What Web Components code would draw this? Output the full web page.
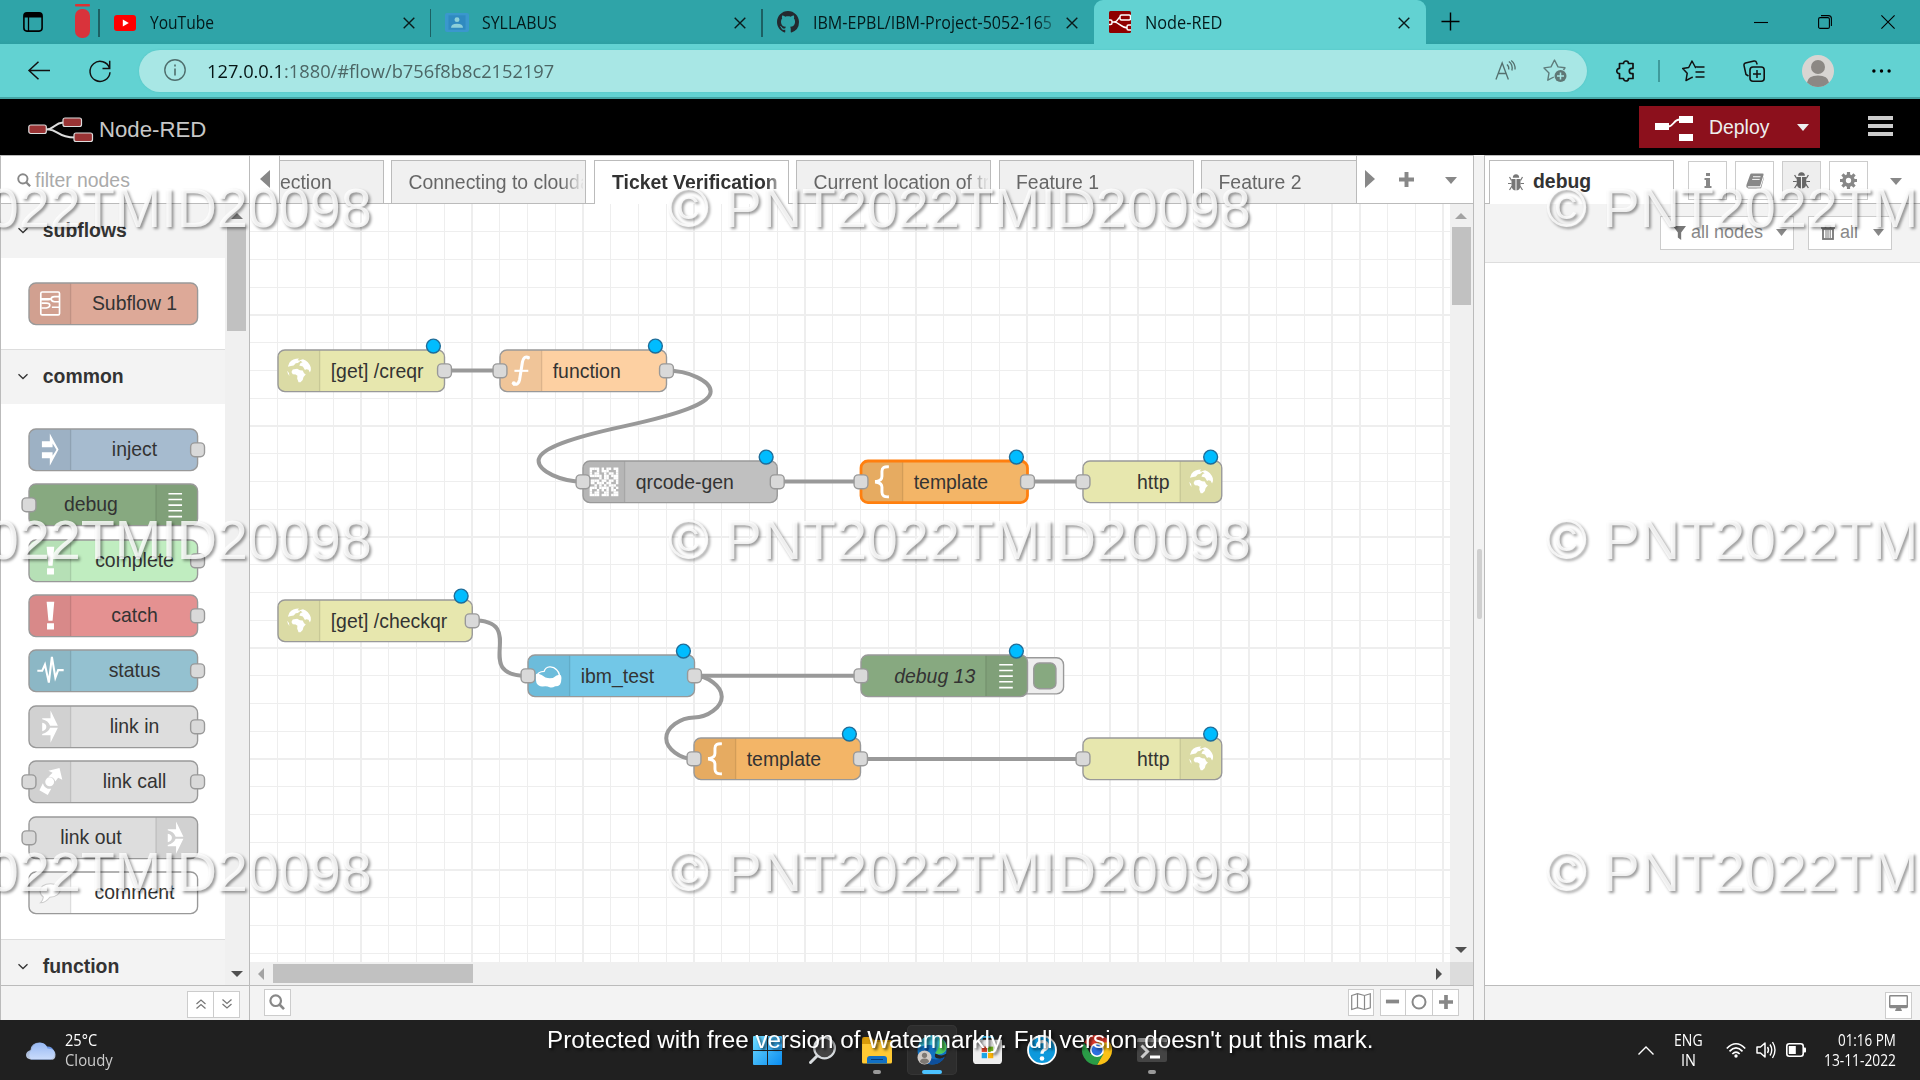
<!DOCTYPE html>
<html lang="en">
<head>
<meta charset="utf-8">
<title>Node-RED</title>
<style>
html,body{margin:0;padding:0;width:1920px;height:1080px;overflow:hidden;background:#fff}
body{font-family:"Liberation Sans",Arial,sans-serif}
</style>
</head>
<body>
<app-screen></app-screen>
<script>
const ICONS = {
 tabact:['0 0 20 20','<rect x=".9" y=".9" width="18.2" height="18.2" rx="3" fill="none" stroke="#000" stroke-width="1.6"/><path d="M1 5V3.500Q1 1 3.500 1H16.500Q19 1 19 3.500V5.500H1z"/><path d="M5.500 5v14" stroke="#000" stroke-width="1.300"/>'],
 redpill:['0 0 15 34','<rect width="15" height="2.500" rx="1" fill="#d33"/><rect y="5" width="15" height="29" rx="7" fill="#d9333b"/>'],
 youtube:['0 0 22 16','<rect width="22" height="16" rx="3" fill="#f00"/><path d="M8.800 4.600v6.800l6-3.400z" fill="#fff"/>'],
 x:['0 0 12 12','<path d="M.7.7 11.300 11.300M11.300.7.7 11.300" stroke="#0a1a1a" stroke-width="1.400" fill="none"/>'],
 classroom:['0 0 24 20','<rect width="24" height="20" rx="2" fill="#3a97cd"/><rect x="3.500" y="2.500" width="17" height="15" fill="#2f8ac0"/><circle cx="12" cy="7" r="2.500" fill="#8ccfd8"/><path d="M6 15.500q0-4.200 6-4.200t6 4.200z" fill="#8ccfd8"/>'],
 github:['0 0 16 16','<path fill="#24292f" d="M8 0C3.580 0 0 3.580 0 8c0 3.540 2.290 6.530 5.470 7.590.4.070.55-.17.55-.38 0-.19-.01-.82-.01-1.490-2.010.37-2.530-.49-2.690-.94-.09-.23-.48-.94-.82-1.130-.28-.15-.68-.52-.01-.53.63-.01 1.080.58 1.230.82.72 1.210 1.870.87 2.330.66.070-.52.28-.87.51-1.070-1.780-.2-3.640-.89-3.640-3.950 0-.87.31-1.590.82-2.150-.08-.2-.36-1.020.08-2.120 0 0 .67-.21 2.200.82.64-.18 1.320-.27 2-.27s1.360.09 2 .27c1.530-1.040 2.200-.82 2.200-.82.44 1.100.16 1.920.08 2.120.51.56.82 1.270.82 2.150 0 3.070-1.870 3.750-3.650 3.950.29.25.54.73.54 1.480 0 1.070-.01 1.930-.01 2.200 0 .21.15.46.55.38A8.010 8.010 0 0 0 16 8c0-4.420-3.580-8-8-8z"/>'],
 nrfav:['0 0 22 22','<clipPath id="c"><rect width="22" height="22" rx="1.500"/></clipPath><g clip-path="url(#c)"><rect width="22" height="22" fill="#8f0000"/><g fill="#8f0000" stroke="#fff" stroke-width="1.500"><path d="M2 11h3C10 11 8 6 12 6M5 11c5 0 7 6 14 6" fill="none"/><rect x="11" y="4" width="10.500" height="5" rx="1.500"/><rect x="-4" y="9" width="7" height="4.500" rx="1.500"/><rect x="18" y="14" width="8" height="5" rx="1.500"/></g></g>'],
 plusthin:['0 0 20 20','<path d="M10 .5v19M.5 10h19" stroke="#000" stroke-width="1.500"/>'],
 min:['0 0 14 14','<path d="M0 7.500h14" stroke="#000" stroke-width="1.100"/>'],
 restore:['0 0 14 14','<rect x=".6" y="2.600" width="10.800" height="10.800" rx="1.500" fill="none" stroke="#000" stroke-width="1.100"/><path d="M3 .6h7.400q3 0 3 3V11" fill="none" stroke="#000" stroke-width="1.100"/>'],
 winx:['0 0 14 14','<path d="M.4.4 13.600 13.600M13.600.4.4 13.600" stroke="#000" stroke-width="1.100"/>'],
 back:['0 0 22 20','<path d="M22 10H1M10.500.8 1 10l9.500 9.200" fill="none" stroke="#111" stroke-width="1.500"/>'],
 reload:['0 0 22 22','<path d="M20.600 8.500A10 10 0 1 0 21 12.200M20.700.8v7.700h-7.200" fill="none" stroke="#111" stroke-width="1.500"/>'],
 info:['0 0 22 22','<circle cx="11" cy="11" r="10.200" fill="none" stroke="#4f6e6d" stroke-width="1.400"/><path d="M11 9.500v7M11 5.500v2" stroke="#4f6e6d" stroke-width="1.600"/>'],
 aloud:['0 0 22 20','<path d="M1 19.500 7.500 3l6.500 16.500M3.500 13.500h8M12.500 4.500q2.500 2 1.800 5M14.500 1.500q4.500 3 3.200 9M17 .5q4.500 3.500 4 9" fill="none" stroke="#54716f" stroke-width="1.400"/>'],
 staradd:['0 0 24 23','<path d="M20.500 11 22 8.800l-7-.9L11.500 1 8 7.900l-7 1 5 5-1.200 7.300 6-3.200" fill="none" stroke="#5f7d7c" stroke-width="1.400" stroke-linejoin="round"/><circle cx="17.500" cy="17" r="6" fill="#5f7876"/><path d="M17.500 13.500v7M14 17h7" stroke="#a9e8e6" stroke-width="1.500"/>'],
 puzzle:['0 0 20 22','<path d="M5.500 3.500H8.500a2.500 2.500 0 0 1 5 0h4.500v4.800h-1a2.700 2.700 0 0 0 0 5.400h1v4.800h-4.500a2.500 2.500 0 0 1-5 0h-4v-4.800a2.600 2.600 0 1 1 0-5.400V3.500z" fill="none" stroke="#111" stroke-width="1.700" stroke-linejoin="round"/>'],
 fav:['0 0 23 22','<path d="M15 6.500 13.500 7.500 10 1 6.700 7.500l-6 1 4.500 4.800L4 20.500l6-3.200.8.3M15 7h7.500M13.500 12h9M13.500 17h9" fill="none" stroke="#111" stroke-width="1.500" stroke-linejoin="round"/>'],
 collect:['0 0 22 22','<path d="M5.500 16 3 14.500 1 5.500q-.3-2 1.500-2.500L11 1q2-.3 2.500 1.500l.7 2" fill="none" stroke="#111" stroke-width="1.500"/><rect x="7" y="7" width="14.200" height="14.200" rx="3" fill="none" stroke="#111" stroke-width="1.600"/><path d="M14 10v8M10 14h8" stroke="#111" stroke-width="1.500"/>'],
 avatar:['0 0 32 32','<circle cx="16" cy="16" r="16" fill="#d8d5d2"/><circle cx="16" cy="12" r="7" fill="#8c8884"/><path d="M5 27.500Q6 20.500 16 20.500T27 27.500Q22 32 16 32T5 27.500z" fill="#8c8884"/>'],
 dots:['0 0 20 4','<g><circle cx="2" cy="2" r="1.800"/><circle cx="10" cy="2" r="1.800"/><circle cx="18" cy="2" r="1.800"/></g>'],
 nrlogo:['0 0 66 26','<path d="M18 12.500c9 0 8-6.500 17-7M18 12.500h3c8 0 9 8 26 8" fill="none" stroke="#ddd" stroke-width="2"/><g fill="#993334" stroke="#ddd" stroke-width="1.200"><rect x=".8" y="8" width="17.500" height="8.500" rx="2"/><rect x="35" y="1" width="18.500" height="8.500" rx="2"/><rect x="46" y="16" width="18.500" height="8.500" rx="2"/></g>'],
 deploy:['0 0 38 25','<g fill="#fff"><rect y="7" width="14" height="7"/><rect x="24" width="14" height="7"/><rect x="24" y="18" width="14" height="7"/></g><path d="M13 10.500c6 0 5-7 12-7" fill="none" stroke="#fff" stroke-width="1.800"/>'],
 caret:['0 0 12 7','<path d="M0 0h12L6 7z" fill="currentColor"/>'],
 burger:['0 0 25 20','<path d="M0 2h25M0 10h25M0 18h25" stroke="#ccc" stroke-width="4"/>'],
 left:['0 0 10 18','<path d="M10 0v18L0 9z" fill="#888"/>'],
 right:['0 0 10 18','<path d="M0 0v18l10-9z" fill="#888"/>'],
 bold:['0 0 16 16','<path d="M8 0v16M0 8h16" stroke="#888" stroke-width="4.200"/>'],
 minus:['0 0 16 16','<path d="M1 8h14" stroke="#888" stroke-width="4"/>'],
 ring:['0 0 16 16','<circle cx="8" cy="8" r="6.500" fill="none" stroke="#888" stroke-width="2"/>'],
 search:['0 0 16 16','<circle cx="6.700" cy="6.700" r="5.300" fill="none" stroke="#888" stroke-width="2.200"/><path d="m10.500 10.500 4.500 4.700" stroke="#888" stroke-width="2.600"/>'],
 map:['0 0 20 17','<path d="M.7 2.500 6.500.7l7 1.800 5.800-1.800v14l-5.800 1.800-7-1.800-5.800 1.800zM6.500.7v14M13.500 2.500v14" fill="none" stroke="#888" stroke-width="1.200"/>'],
 monitor:['0 0 20 17','<path fill="#888" fill-rule="evenodd" d="M1.500 0h17Q20 0 20 1.500v11q0 1.500-1.500 1.500H12.500v1.500h1V17h-7v-1.500h1V14h-6Q0 14 0 12.500V1.500Q0 0 1.500 0zM1.500 1.600V10.500h17V1.600z"/>'],
 bug:['0 0 16 17','<g fill="none" stroke="currentColor" stroke-width="1.200"><path d="M3.500 6.500 1.500 3M12.500 6.500l2-3.500M3.500 9.500H0M12.500 9.500H16M4 12l-2.500 4M12 12l2.500 4"/></g><path d="M4.800 3.800a3.200 3.500 0 0 1 6.400 0z" fill="currentColor"/><path d="M3.500 5h4v11.500Q3.500 16 3.500 11zM12.500 5h-4v11.500q4-.5 4-5.500z" fill="currentColor"/>'],
 i:['0 0 8 15','<path fill="#888" d="M2 0h4v3H2zM.5 5H6v8h1.500v2H.5v-2H2V7H.5z"/>'],
 book:['0 0 18 17','<path fill="#888" d="M5.500.5h11q1.500 0 1 1.500L14 14H2.500q-1 0-1 .8t1 .7H14.500L18 4v1L15 16.500H2.500Q-.3 16 .5 12.500L4 2Q4.500.5 5.500.5z"/><path d="M7 4h7.500M6.200 6.800h7.500" stroke="#fff" stroke-width="1"/>'],
 gear:['0 0 16 16','<circle cx="8" cy="8" r="4.200" fill="none" stroke="#888" stroke-width="3.400"/><path d="M8 0v3M8 13v3M0 8h3M13 8h3M2.300 2.300l2 2M11.700 11.700l2 2M13.700 2.300l-2 2M4.300 11.700l-2 2" stroke="#888" stroke-width="3"/>'],
 filter:['0 0 14 14','<path d="M0 0h14L8.800 6.500V14L5.200 11.500v-5z" fill="#777"/>'],
 trash:['0 0 14 15','<path d="M0 3h14M4.500 3V1h5v2" fill="none" stroke="#777" stroke-width="1.600"/><rect x="2" y="4" width="10" height="10" fill="none" stroke="#777" stroke-width="1.800"/><path d="M5 5v8M7 5v8M9.200 5v8" stroke="#777" stroke-width="1"/>'],
 chev:['0 0 10 5','<path d="M.5.3 5 4.500 9.500.3" fill="none" stroke="#333" stroke-width="1.300"/>'],
 dup:['0 0 10 10','<path d="M.5 5 5 1l4.500 4M.5 9.500 5 5.500l4.500 4" fill="none" stroke="#777" stroke-width="1.300"/>'],
 ddown:['0 0 10 10','<path d="M.5.5 5 4.500 9.500.5M.5 5 5 9l4.500-4" fill="none" stroke="#777" stroke-width="1.300"/>'],
 sup:['0 0 12 6','<path d="M0 6 6 0l6 6z" fill="currentColor"/>'],
 sleft:['0 0 6 12','<path d="M6 0v12L0 6z" fill="currentColor"/>'],
 sright:['0 0 6 12','<path d="M0 0v12l6-6z" fill="currentColor"/>'],
 cloud:['0 0 30 20','<defs><linearGradient id="g" x2="0" y2="1"><stop stop-color="#9dbdf5"/><stop offset="1" stop-color="#dbe8ff"/></linearGradient></defs><path d="M5 19.500a5 6 0 0 1 .5-9.500A8.500 8.500 0 0 1 21 6.500a7 7 0 0 1 4 13z" fill="#6f9ae8"/><path d="M4.500 19.500q-4.500-1-4.500-4.500t4.500-5q.8-7.500 9-7.500 6.500 0 8 6 8 0 8 6t-4.500 5z" fill="url(#g)" opacity=".85"/>'],
 win:['0 0 29 29','<defs><linearGradient id="g" x2="1" y2="1"><stop stop-color="#6fdcff"/><stop offset="1" stop-color="#0a8cf0"/></linearGradient></defs><path d="M0 1q0-1 1-1h13v14H0zM15 0h13q1 0 1 1v13H15zM0 15h14v14H1q-1 0-1-1zM15 15h14v13q0 1-1 1H15z" fill="url(#g)"/>'],
 wsearch:['0 0 27 29','<circle cx="15.500" cy="12" r="10.300" fill="#444" stroke="#d8dcdf" stroke-width="2.300"/><path d="M8 20 1.500 26.500" stroke="#d8dcdf" stroke-width="3" stroke-linecap="round"/>'],
 folder:['0 0 30 27','<path d="M0 2q0-2 2-2h7l3 3h16q2 0 2 2v10H0z" fill="#d99b0a"/><path d="M0 7h11l3-2h16v20q0 1.500-1.500 1.500h-27Q0 26.500 0 25z" fill="#ffc933"/><path d="M5 26.500V22q0-3 3-3h14q3 0 3 3v4.500z" fill="#1170c4"/><path d="M9 22.500h12" stroke="#063d78" stroke-width="1"/>'],
 edge:['0 0 30 30','<circle cx="15" cy="15" r="14.500" fill="#1272c2"/><path d="M1 12Q4 0 16 .5 29 1.500 29.500 12c0 7-8 8.500-11 6.500 2-2 1.500-8-5-8.500C7 9.500 2 13 1 12z" fill="#36b7cf"/><path d="M22 2.500q7.500 4 7.500 10.500c-1 6-8 7-11.500 5 4-3 5-10 4-15.500z" fill="#51cc5c"/><path d="M18.500 18.500q6 3.500 10 .5l1.500 0q-1 2-2 3.500-4 2-9 .5-2-2-.5-4.500z" fill="#252525"/><path d="M11 16q-1 8 8 8.500 5 0 9-3Q24 29.500 15 29.500 4 28 4 20q0-6 8-7z" fill="#0d4f9c"/><circle cx="7.500" cy="22.500" r="7" fill="#cfcac6"/><circle cx="7.500" cy="20.300" r="2.600" fill="#7d7873"/><path d="M3 27q0-3.500 4.500-3.500T12 27q-4.500 4-9 0z" fill="#7d7873"/>'],
 store:['0 0 30 30','<path d="M9 6V3q0-2 2-2h8q2 0 2 2v3" fill="none" stroke="#38bdf0" stroke-width="2"/><path d="M0 4h30v21q0 4-4 4H4q-4 0-4-4z" fill="#eee"/><path d="M9 11h5.500v5.500H9z" fill="#e8482c"/><path d="M15.500 11H21v5.500h-5.500z" fill="#72b51c"/><path d="M9 17.500h5.500V23H9z" fill="#1ba5e6"/><path d="M15.500 17.500H21V23h-5.500z" fill="#fcb40a"/>'],
 help:['0 0 30 30','<circle cx="15" cy="15" r="14" fill="#0d99dc" stroke="#fff" stroke-width="1.800"/><path d="M10.500 11.500q0-5 5-5 4.800.3 4.800 4.200 0 2.600-2.800 4-2.500 1.400-2.500 4" fill="none" stroke="#fff" stroke-width="3.200"/><circle cx="15" cy="23.500" r="2.300" fill="#fff"/>'],
 chrome:['0 0 30 30','<path d="M15 15 2 7.500A15 15 0 0 1 28 7.500z" fill="#e33b2e"/><path d="M28 7.500A15 15 0 0 1 15 30l6-11.500L15 7.500z" fill="#fbc116"/><path d="M2 7.500A15 15 0 0 0 15 30l6.500-11-13 0z" fill="#2a9c47"/><circle cx="15" cy="15" r="7" fill="#fff"/><circle cx="15" cy="15" r="5.400" fill="#2c70e0"/>'],
 term:['0 0 30 24','<rect width="30" height="24" rx="2" fill="#444"/><path d="M0 2q0-2 2-2h26q2 0 2 2v2H0z" fill="#888"/><path d="m4.500 7.500 6 6-6 6" fill="none" stroke="#ccc" stroke-width="3"/><path d="M13 19h10" stroke="#fff" stroke-width="3"/>'],
 wchev:['0 0 16 9','<path d="M.5 8.500 8 1l7.500 7.500" fill="none" stroke="#fff" stroke-width="1.400"/>'],
 wifi:['0 0 20 16','<g fill="none" stroke="#fff" stroke-width="1.700"><path d="M.8 6.500q9.200-9.500 18.400 0M3.500 9.300q6.500-6.700 13 0M6.300 12q3.700-3.800 7.400 0"/></g><circle cx="10" cy="14" r="1.700" fill="#fff"/>'],
 vol:['0 0 20 18','<path d="M1 6h3.500L9 2v14l-4.500-4H1z" fill="none" stroke="#fff" stroke-width="1.500" stroke-linejoin="round"/><path d="M11.500 6q2 3 0 6M14 3.500q3.500 5.500 0 11M16.500 1q5 8 0 16" fill="none" stroke="#fff" stroke-width="1.400"/>'],
 batt:['0 0 20 14','<rect x=".8" y=".8" width="16.400" height="12.400" rx="2.500" fill="none" stroke="#fff" stroke-width="1.600"/><rect x="2.800" y="3" width="7" height="8" fill="#fff"/><path d="M18 4.500h1q1 0 1 1v3q0 1-1 1h-1z" fill="#fff"/>']
};

/* Glyphs of the flow nodes, each drawn in a 30 by 30 box. */
const GLYPHS = {
 subflow:'<g fill="none" stroke="#fff" stroke-width="1.200"><rect x="8.500" y="6.500" width="13.500" height="16.500" rx="1"/><path d="M8.500 12h5.500q1 0 1.500-.5M8.500 11.500H16M16.500 17.500H22M9 14.500h3.500q2.500 0 2.500 1.500t-2.500 2H9M22 9.800h-3.500q-2.500 0-2.500 1.700t2.500 2H22"/></g>',
 inject:'<path fill="#fff" fill-rule="evenodd" d="M9.300 8.800H15V3.200L21.300 14.800 15 26.400V21H9.300V16.800H17V13.200H9.300zM17 10.500V19.300L19.800 14.900z"/>',
 debug:'<path d="M10 7h9.800M10 11.200h9.800M10 15.200h9.800M10 19.300h9.800M10 23.500h9.800" stroke="#fff" stroke-width="1.200"/>',
 bang:'<path fill="#fff" d="M12.700 4.800h5.500l-1.200 13.700h-3zM13 20.300h5v4.500h-5z"/>',
 status:'<path d="M6 15h3.500l2-4.500 2.800 13L16.500 5l2.500 15 2-5.500H25" fill="none" stroke="#fff" stroke-width="1.500" stroke-linejoin="miter"/>',
 linkin:'<path fill="#fff" d="M15.500 3.200 20.800 14.300H15.200Q14 10.500 9.500 9.500V8.800h6zM15.500 26.400 20.800 15.700H15.200Q14 19 9.500 20.200V21h6z"/><path d="M9.500 12q3 .5 3 3t-3 3.200z" fill="#fff"/>',
 linkcall:'<path fill="#fff" d="M14 7 22 5l2 8.500-3-1.500-2 2.800a4.600 4.600 0 0 0-5-3.500L17 8.500z"/><circle cx="14.900" cy="15" r="3.200" fill="#fff"/><path fill="#fff" d="m10 16 -2.500 5 6 3.500L16 20a5.200 5.200 0 0 1-6-4z"/>',
 comment:'<path d="M15.500 8.500c4.500 0 7 2 7 4.500s-3 5-7.500 5.200q-3 4-6.700 4 1.800-1.600 2-4.200-2.300-1.600-2.300-4.200c0-3.200 3-5.300 7.500-5.300z" fill="#fff" stroke="#ccc" stroke-width=".8"/>',
 globe:'<path fill="#fff" d="M8.600 9.200Q11 6.200 15.500 6.200l-1 1.200 2.200.3-2 1.600-1.500.2-1.500 1.600-2 .4-2.200.6zM16 7.300l2.400-.6q4.200 1.600 5.600 5.800.5 2.200-.6 3.800l-1-2-1.600-.4-1 .5-1.500-2.500-2.600-.8 1-1.700 1.400-.5zM11 14l3.200-.4 2 1 2 .2 1 2 1.200.8-1.600 1.800-.6 2.200-1.600 1.600h-1.400l-1-2.600.2-2-1.300-1-2.100-.2-.9-1.500zM7 15l1.300 1.500.3 2.200L7.500 17z"/>',
 func:'<path d="M21.300 5.500q-3.800-1.700-4.700 3L14.500 21.500q-.8 4-4.500 3" fill="none" stroke="#fff" stroke-width="2.200"/><path d="M10.800 15h10" stroke="#fff" stroke-width="1.500"/><circle cx="20.700" cy="5.600" r="1.300" fill="#fff"/><circle cx="10.400" cy="24" r="1.500" fill="#fff"/>',
 brace:'<path d="M20.500 4.200q-5-.5-5 3.200v3.600q0 3.200-4 3.700v.6q4 .5 4 3.700V22.500q0 3.700 5 3.300" fill="none" stroke="#fff" stroke-width="2.100"/>',
 cloud:'<path d="M7 15q.5-3 5-3.200 1-3 4-3.200t5 2q1.500 1.200 2.300 4.400" fill="none" stroke="#fff" stroke-width="1"/><path d="M6 14.500Q6 13 8 13.600t5 2.600q5 1.500 8-1.500l2-.5q1.500 0 1.500 2.500t-1 4.500q-1.500 1.500-3.500 1.300-2 1.400-4 .8-2-1.200-5-.6-3 .2-4.500-2.500Q5.800 17.500 6 14.500z" fill="#fff"/>',
 qr:(()=>{const m=['111101011011','100101110001','101100101101','111110110111','000010110011','111101101101','110111011001','001010101110','111011110101','100101010110','101100110011','111101110111'];let s='';m.forEach((r,y)=>[...r].forEach((c,x)=>{if(c==='1')s+=`<rect x="${(5.200+x*1.720).toFixed(2)}" y="${(4.700+y*1.720).toFixed(2)}" width="1.760" height="1.760" fill="#fff"/>`}));return s})()
};

function define(name, html, setup){
  const t=document.createElement('template'); t.innerHTML=html;
  customElements.define(name, class extends HTMLElement{
    connectedCallback(){
      if(this.shadowRoot) return;
      this.attachShadow({mode:'open'}).append(t.content.cloneNode(true));
      if(setup) setup.call(this,this.shadowRoot);
    }
  });
}

/* Icon: name, drawn width (w) and height (h). */
customElements.define('ui-icon', class extends HTMLElement{
  connectedCallback(){
    const [vb,body]=ICONS[this.getAttribute('name')], w=this.getAttribute('w'), h=this.getAttribute('h');
    if(!this.shadowRoot) this.attachShadow({mode:'open'});
    this.shadowRoot.innerHTML=`<style>:host{display:block;flex:none;width:${w}px;height:${h}px}svg{display:block;overflow:visible}</style><svg width="${w}" height="${h}" viewBox="${vb}" preserveAspectRatio="none">${body}</svg>`;
  }
});

/* One line of text, condensed or widened to the width w. */
define('fit-text','<style>:host{display:block;flex:none;white-space:pre;text-align:left}span{display:inline-block;transform-origin:0 50%}</style><span><slot></slot></span>',function(r){
  const w=+this.getAttribute('w'), s=r.querySelector('span');
  this.style.width=w+'px';
  s.style.transform=`scaleX(${w/s.offsetWidth})`;
});

/* Flow node, used in the palette and on the canvas. */
customElements.define('flow-node', class extends HTMLElement{
  connectedCallback(){
    const a=n=>this.getAttribute(n), has=n=>this.hasAttribute(n);
    const K=1.3875, w=+a('w'), right=has('right'), pal=has('palette');
    let label;
    if(pal) label=`<text x="${right?(w-30)/2-1.100:30+(w-30)/2+.3}" y="19.200" text-anchor="middle">${a('label')}</text>`;
    else label=right?`<text x="${w-37.700}" y="20" text-anchor="end">${a('label')}</text>`:`<text x="38" y="20">${a('label')}</text>`;
    const ix=right?w-30:0;
    const gx=right&&pal?w-31:ix;
    const port=x=>`<rect x="${x-5}" y="10" width="10" height="10" rx="3" fill="#d9d9d9" stroke="#999"/>`;
    const sel=has('selected');
    this.attachShadow({mode:'open'}).innerHTML=`<style>
      :host{display:block;flex:none;width:${w*K}px;height:${30*K}px}
      :host([x]){position:absolute;left:${(a('x')||0)*K}px;top:${.1+((a('y')||0)-15)*K}px}
      svg{display:block;overflow:visible}
      text{font:14px "Liberation Sans",Arial,sans-serif;fill:#333}
      :host([italic]) text{font-style:italic}
      </style><svg width="${w*K}" height="${30*K}" viewBox="0 0 ${w} 30">
      ${has('button')?`<rect x="${w-10}" y="2" width="36" height="26" rx="5" fill="#eee" stroke="#999"/><rect x="${w+4.500}" y="5.800" width="16" height="18.500" rx="4" fill="${a('color')}" stroke="#999"/>`:''}
      <rect width="${w}" height="30" rx="5" fill="${a('color')}" stroke="none"/>
      <path d="${right?`M${ix} 0H${w-5}Q${w} 0 ${w} 5V25Q${w} 30 ${w-5} 30H${ix}z`:'M30 0H5Q0 0 0 5V25Q0 30 5 30H30z'}" fill="#000" fill-opacity=".05"/>
      <path d="M${right?ix:30} 0V30" stroke="#000" stroke-opacity=".1"/>
      <rect width="${w}" height="30" rx="5" fill="none" stroke="${sel?'#ff7f0e':'#999'}" stroke-width="${sel?2:1}"/>
      <g transform="translate(${pal?gx:ix-.4})">${GLYPHS[a('icon')]}</g>${label}
      ${has('in')?port(0):''}${has('out')?port(w):''}
      ${has('changed')?`<circle cx="${w-8}" cy="-2.800" r="5" fill="#00bcff" stroke="#1f6d99"/>`:''}</svg>`;
  }
});

define('edge-tab',`<style>
:host{display:flex;align-items:center;height:44px;box-sizing:border-box;flex:none;font:18px "Open Sans","Noto Sans",sans-serif;color:#04191a}
.t{flex:1;line-height:26px;padding-bottom:3px;overflow:hidden;min-width:0}
:host([fade]) .t{-webkit-mask:linear-gradient(90deg,#000 88%,transparent 99%)}
:host([active]){background:#62d2d2;border-radius:9px 9px 0 0}
</style><slot name="icon"></slot><div class="t"><slot></slot></div><ui-icon name="x" w="12" h="12"></ui-icon>`);

define('edge-tabstrip',`<style>
:host{display:flex;align-items:center;height:44px;background:linear-gradient(#2fa4a8 90%,#2d9fa2);flex:none}
.sep{width:1.500px;height:28px;background:#1c6063;flex:none;margin-top:2px}
</style>
<ui-icon name="tabact" w="20" h="20" style="margin-left:23px"></ui-icon>
<ui-icon name="redpill" w="15" h="34" style="margin:-3px 0 0 32px"></ui-icon>
<div class="sep" style="margin-left:8px"></div>
<edge-tab style="width:330px;padding:2px 15px 0 14px"><ui-icon slot="icon" name="youtube" w="22" h="16" style="margin-right:14px;margin-top:-1px"></ui-icon><fit-text w="64">YouTube</fit-text></edge-tab>
<div class="sep"></div>
<edge-tab style="width:330px;padding:2px 15px 0 14px"><ui-icon slot="icon" name="classroom" w="24" h="19" style="margin:-1px 13px 0 0"></ui-icon><fit-text w="75">SYLLABUS</fit-text></edge-tab>
<div class="sep"></div>
<edge-tab fade style="width:331px;padding:2px 16px 0 14px"><ui-icon slot="icon" name="github" w="22" h="22" style="margin:-2px 14px 0 0"></ui-icon><fit-text w="239">IBM-EPBL/IBM-Project-5052-165</fit-text></edge-tab>
<edge-tab active style="width:332px;padding:2px 16px 0 15px"><ui-icon slot="icon" name="nrfav" w="22" h="22" style="margin:-2px 14px 0 0"></ui-icon><fit-text w="77">Node-RED</fit-text></edge-tab>
<ui-icon name="plusthin" w="19" h="19" style="margin-left:15px;margin-top:-1px"></ui-icon>
<ui-icon name="min" w="14" h="14" style="margin-left:294px"></ui-icon>
<ui-icon name="restore" w="14" h="14" style="margin-left:50px"></ui-icon>
<ui-icon name="winx" w="14" h="14" style="margin-left:49px"></ui-icon>`);

define('edge-toolbar',`<style>
:host{display:flex;align-items:center;height:55px;box-sizing:border-box;background:#62d2d2;border-bottom:2px solid #45a5a5;flex:none;font:18px "Open Sans","Noto Sans",sans-serif}
.addr{display:flex;align-items:center;width:1448px;height:42px;border-radius:21px;background:#a8e7e5;margin-left:28px;box-sizing:border-box;padding:0 20px 0 25px;flex:none;box-shadow:0 0 2px #52c2c2}
fit-text{line-height:26px;color:#4c6665}
b{font-weight:400;color:#051515}
</style>
<ui-icon name="back" w="22" h="19" style="margin-left:28px"></ui-icon>
<ui-icon name="reload" w="22" h="22" style="margin-left:39px"></ui-icon>
<div class="addr"><ui-icon name="info" w="22" h="22" style="margin-top:-1px"></ui-icon><fit-text w="347" style="margin-left:21px"><b>127.0.0.1</b>:1880/#flow/b756f8b8c2152197</fit-text>
<ui-icon name="aloud" w="21" h="20" style="margin-left:auto;margin-top:-2px"></ui-icon><ui-icon name="staradd" w="24" h="23" style="margin-left:27px"></ui-icon></div>
<ui-icon name="puzzle" w="20" h="22" style="margin-left:28px"></ui-icon>
<div style="width:1.500px;height:22px;background:#3f9b9c;margin-left:23px"></div>
<ui-icon name="fav" w="23" h="22" style="margin-left:22px"></ui-icon>
<ui-icon name="collect" w="22" h="22" style="margin-left:38px"></ui-icon>
<ui-icon name="avatar" w="32" h="32" style="margin-left:37px"></ui-icon>
<ui-icon name="dots" w="19" h="4" style="margin-left:38px"></ui-icon>`);

define('nr-header',`<style>
:host{display:flex;align-items:center;height:56px;background:#000;flex:none;color:#c7c7c7}
.name{font-size:22.200px;line-height:26px;margin:5px auto 0 5px}
.dep{display:flex;align-items:center;width:181px;height:42px;background:#8c101c;color:#eee;font-size:19.400px;box-sizing:border-box;padding-left:16px}
</style>
<ui-icon name="nrlogo" w="66" h="26" style="margin:6px 0 0 28px"></ui-icon><div class="name">Node-RED</div>
<div class="dep"><ui-icon name="deploy" w="38" h="25" style="margin-top:2px"></ui-icon><span style="margin-left:16px">Deploy</span><ui-icon name="caret" w="12" h="7" style="margin-left:28px"></ui-icon></div>
<ui-icon name="burger" w="25" h="20" style="margin:-2px 27px 0 48px"></ui-icon>`);

define('palette-category',`<style>
:host{display:block}
.h{display:flex;align-items:center;height:54.500px;box-sizing:border-box;background:#f3f3f3;border-top:1px solid #ddd;padding-left:17px;font-weight:700;font-size:19.400px;color:#333}
.h span{margin-left:14.800px}
.b{display:flex;flex-direction:column;gap:13.800px;padding:25.200px 0 24.800px 28px}
:host([empty]) .b{display:none}
</style><div class="h"><ui-icon name="chev" w="10" h="5"></ui-icon><span><slot name="title"></slot></span></div><div class="b"><slot></slot></div>`);

define('nr-palette',`<style>
:host{display:flex;flex-direction:column;width:249px;box-sizing:border-box;border-left:1px solid #bbb;flex:none}
.s{display:flex;align-items:center;height:49px;box-sizing:border-box;border-top:1px solid #bbb;border-bottom:1px solid #bbb;padding-left:16px;color:#aaa;font-size:19.400px;flex:none}
.m{display:flex;height:781px;overflow:hidden;flex:none}
.list{width:224px;overflow:hidden}
.bar{width:24px;background:#f0f0f0;display:flex;flex-direction:column;align-items:center;box-sizing:border-box;padding:9px 1px 8px 0;color:#505050}
.thumb{width:19px;height:104px;background:#c1c1c1;margin-top:8px}
.f{display:flex;justify-content:flex-end;height:35px;box-sizing:border-box;border-top:1px solid #bbb;background:#f3f3f3;padding:5px 9px 0 0}
.f div{width:27px;height:27px;box-sizing:border-box;border:1px solid #ccc;background:#fff;display:grid;place-items:center}
.f ui-icon{margin-top:-2px}
</style>
<div class="s"><ui-icon name="search" w="14" h="14"></ui-icon><span style="margin:2px 0 0 4px">filter nodes</span></div>
<div class="m"><div class="list">
<palette-category style="margin-top:-1px"><span slot="title">subflows</span>
<flow-node palette w="121.500" label="Subflow 1" color="#dda998" icon="subflow"></flow-node></palette-category>
<palette-category><span slot="title">common</span>
<flow-node palette w="121.500" label="inject" color="#a6bbcf" icon="inject" out></flow-node>
<flow-node palette w="121.500" label="debug" color="#87a980" icon="debug" right in></flow-node>
<flow-node palette w="121.500" label="complete" color="#c0edc0" icon="bang" out></flow-node>
<flow-node palette w="121.500" label="catch" color="#e49191" icon="bang" out></flow-node>
<flow-node palette w="121.500" label="status" color="#94c1d0" icon="status" out></flow-node>
<flow-node palette w="121.500" label="link in" color="#dddddd" icon="linkin" out></flow-node>
<flow-node palette w="121.500" label="link call" color="#dddddd" icon="linkcall" in out></flow-node>
<flow-node palette w="121.500" label="link out" color="#dddddd" icon="linkin" right in></flow-node>
<flow-node palette w="121.500" label="comment" color="#ffffff" icon="comment"></flow-node></palette-category>
<palette-category empty><span slot="title">function</span></palette-category>
</div><div class="bar"><ui-icon name="sup" w="12" h="6" style="color:#777"></ui-icon><div class="thumb"></div><ui-icon name="caret" w="12" h="6" style="margin-top:auto"></ui-icon></div></div>
<div class="f"><div><ui-icon name="dup" w="10" h="10"></ui-icon></div><div style="margin-left:-1px"><ui-icon name="ddown" w="10" h="10"></ui-icon></div></div>`);

define('flow-tab',`<style>
:host{display:block;width:195px;height:43px;box-sizing:border-box;border:1px solid #bbb;border-bottom:0;background:#f0f0f0;flex:none;font-size:19.400px;line-height:40px;color:#666;padding:1px 2px 0 16.500px}
div{overflow:hidden;white-space:nowrap;-webkit-mask:linear-gradient(90deg,#000 88%,rgba(0,0,0,.1) 99%)}
:host([active]){height:44px;margin-bottom:-1px;background:#fff;color:#333;font-weight:700;padding-left:17.500px}
</style><div><slot></slot></div>`);

define('flow-canvas',`<style>
:host{display:block;position:relative;width:1200px;height:758px;background:#fff;overflow:hidden;flex:none}
svg{position:absolute;inset:0}
</style><svg width="1200" height="758"><g class="grid" fill="#eee"></g><g transform="translate(0 .1) scale(1.3875)" fill="none" stroke="#999" stroke-width="2.900">
<path d="M140 120H180"/>
<path d="M300 120C316 120 332 127.500 332 135S316 150 270 160 208 177.500 208 185 224 200 240 200"/>
<path d="M380 200H440M560 200H600M320 340H440M440 400H600"/>
<path d="M160 300C202.400 300 157.600 340 200 340"/>
<path d="M320 340C330 340 340 347.500 340 355S330 370 320 370 300 377.500 300 385 310 400 320 400"/></g></svg>
<flow-node x="20" y="120" w="120" label="[get] /creqr" color="#e7e7ae" icon="globe" out changed></flow-node>
<flow-node x="180" y="120" w="120" label="function" color="#fdd0a2" icon="func" in out changed></flow-node>
<flow-node x="240" y="200" w="140" label="qrcode-gen" color="#c0c0c0" icon="qr" in out changed></flow-node>
<flow-node x="440" y="200" w="120" label="template" color="#f3b567" icon="brace" in out changed selected></flow-node>
<flow-node x="600" y="200" w="100" label="http" color="#e7e7ae" icon="globe" right in changed></flow-node>
<flow-node x="20" y="300" w="140" label="[get] /checkqr" color="#e7e7ae" icon="globe" out changed></flow-node>
<flow-node x="200" y="340" w="120" label="ibm_test" color="#72c7e7" icon="cloud" in out changed></flow-node>
<flow-node x="440" y="340" w="120" label="debug 13" color="#87a980" icon="debug" right italic in changed button></flow-node>
<flow-node x="320" y="400" w="120" label="template" color="#f3b567" icon="brace" in out changed></flow-node>
<flow-node x="600" y="400" w="100" label="http" color="#e7e7ae" icon="globe" right in changed></flow-node>`,function(r){
  let s='';
  for(let n=0;n<43;n++){const p=27+n*27.750,f=p%1,two=f===.25||(f===.5&&n>=30);
    s+=`<rect x="${two?Math.floor(p):Math.round(p)}" width="${two?2:1}" height="758"/>`;}
  for(let n=0;n<27;n++){const p=27+n*27.750,two=p%1===.25;
    s+=`<rect y="${two?Math.floor(p):Math.round(p)}" height="${two?2:1}" width="1200"/>`;}
  r.querySelector('.grid').innerHTML=s;
});

define('nr-workspace',`<style>
:host{display:flex;flex-direction:column;width:1225px;box-sizing:border-box;border-left:1px solid #bbb;border-right:1px solid #bbb;flex:none;background:#fff}
.tabs{display:flex;height:49px;box-sizing:border-box;border-top:1px solid #bbb;border-bottom:1px solid #bbb;flex:none}
.scroll{display:flex;align-items:flex-end;gap:7.500px;width:1078px;margin-left:28px;border-left:1px solid #bbb;border-right:1px solid #bbb;box-sizing:border-box;flex:none;height:47px;clip-path:inset(0 0 -1px 0)}
.view{display:flex;height:758px}
.v{width:23px;background:#f0f0f0;display:flex;flex-direction:column;align-items:center;box-sizing:border-box;padding:9px 0 9px}
.h{display:flex;height:23px;background:#f0f0f0;align-items:center;color:#505050}
.f{display:flex;height:35px;box-sizing:border-box;border-top:1px solid #bbb;background:#f3f3f3;padding:3px 14px 0 14px}
.f div{width:26.500px;height:27px;box-sizing:border-box;border:1px solid #ccc;background:#fff;display:grid;place-items:center}
.f ui-icon{margin-top:-2px}
</style>
<div class="tabs">
<ui-icon name="left" w="10" h="18" style="margin:14px -20px 0 10px"></ui-icon>
<div class="scroll" style="margin-left:29px"><flow-tab style="width:103.500px;padding-left:0;border-left:0">ection</flow-tab><flow-tab>Connecting to cloudant</flow-tab><flow-tab active>Ticket Verification</flow-tab><flow-tab>Current location of train</flow-tab><flow-tab>Feature 1</flow-tab><flow-tab style="width:155px;border-right:0">Feature 2</flow-tab></div>
<ui-icon name="right" w="10" h="18" style="margin:14px 0 0 8px"></ui-icon><ui-icon name="bold" w="15" h="15" style="margin:16px 0 0 24px"></ui-icon><ui-icon name="caret" w="12" h="7" style="margin:21px 0 0 31px;color:#888"></ui-icon></div>
<div class="view"><flow-canvas></flow-canvas><div class="v"><ui-icon name="sup" w="12" h="6" style="color:#a3a3a3;margin-left:-1px"></ui-icon><div style="width:19px;height:78px;background:#c1c1c1;margin-top:8px"></div><ui-icon name="caret" w="12" h="6" style="margin-top:auto;margin-left:-1px;color:#505050"></ui-icon></div></div>
<div class="h"><ui-icon name="sleft" w="6" h="12" style="margin-left:8px;color:#a3a3a3"></ui-icon><div style="width:200px;height:19px;background:#c1c1c1;margin-left:9px"></div><ui-icon name="sright" w="6" h="12" style="margin-left:auto"></ui-icon><div style="width:23px;height:23px;background:#dcdcdc;margin-left:8px"></div></div>
<div class="f"><div><ui-icon name="search" w="16" h="16"></ui-icon></div><div style="margin-left:auto"><ui-icon name="map" w="20" h="17"></ui-icon></div><div style="margin-left:5.500px"><ui-icon name="minus" w="15" h="15"></ui-icon></div><div style="margin-left:-1px;width:28px"><ui-icon name="ring" w="16" h="16"></ui-icon></div><div style="margin-left:-1px;width:27px"><ui-icon name="bold" w="14" h="14"></ui-icon></div></div>`);

define('nr-sidebar',`<style>
:host{display:flex;flex-direction:column;width:436px;box-sizing:border-box;border-left:1px solid #bbb;flex:none;background:#fff}
.tabs{display:flex;align-items:flex-end;height:49px;box-sizing:border-box;border-top:1px solid #bbb;border-bottom:1px solid #bbb;padding-left:4px;flex:none}
.tab{display:flex;align-items:center;width:185px;height:44px;margin-bottom:-1px;box-sizing:border-box;border:1px solid #bbb;border-bottom:0;background:#fff;color:#333;font-weight:700;font-size:19.400px;padding:0 0 2px 18px;margin-right:14px}
.b{width:39px;height:39px;box-sizing:border-box;border:1px solid #ccc;background:#fff;display:grid;place-items:center;margin:0 8px 3px 0}
.tool{display:flex;height:59px;box-sizing:border-box;background:#f3f3f3;border-bottom:1px solid #ddd;padding:12px 28px 0 0;justify-content:flex-end;flex:none}
.tool div{display:flex;align-items:center;height:34px;box-sizing:border-box;border:1px solid #ccc;background:#fff;font-size:18px;color:#888;padding:0 12px 1px}
.f{display:flex;justify-content:flex-end;height:35px;box-sizing:border-box;border-top:1px solid #bbb;background:#f3f3f3;padding:6px 8px 0 0;margin-top:auto}
.f div{width:27px;height:27px;box-sizing:border-box;border:1px solid #ccc;background:#fff;display:grid;place-items:center}
</style>
<div class="tabs"><div class="tab"><ui-icon name="bug" w="16" h="17" style="color:#777;margin-top:1px"></ui-icon><span style="margin-left:9px">debug</span></div>
<div class="b"><ui-icon name="i" w="8" h="15"></ui-icon></div><div class="b"><ui-icon name="book" w="18" h="16"></ui-icon></div><div class="b" style="background:#eee"><ui-icon name="bug" w="17" h="17" style="color:#666"></ui-icon></div><div class="b"><ui-icon name="gear" w="17" h="17"></ui-icon></div><ui-icon name="caret" w="12" h="7" style="margin:0 0 18px 14px;color:#888"></ui-icon></div>
<div class="tool"><div style="width:134px"><ui-icon name="filter" w="13" h="14"></ui-icon><span style="margin-left:5px">all nodes</span><ui-icon name="caret" w="11" h="7" style="margin-left:auto;margin-right:-6px"></ui-icon></div><div style="width:84px;margin-left:14px"><ui-icon name="trash" w="14" h="15"></ui-icon><span style="margin-left:5px">all</span><ui-icon name="caret" w="11" h="7" style="margin-left:auto;margin-right:-5px"></ui-icon></div></div>
<div class="f"><div><ui-icon name="monitor" w="19" h="16" style="margin-top:-5px"></ui-icon></div></div>`);

define('nr-editor',`<style>:host{display:flex;height:865px;flex:none}
.sep{width:10px;background:#f3f3f3;display:flex;align-items:center;justify-content:center}
.sep i{width:5px;height:70px;background:#d0d0d0;border-radius:2px;margin-bottom:8px}</style>
<nr-palette></nr-palette><nr-workspace></nr-workspace><div class="sep"><i></i></div><nr-sidebar></nr-sidebar>`);

define('task-icon',`<style>:host{display:grid;place-items:center;width:50px;height:50px;box-sizing:border-box;border-radius:5px;position:relative;flex:none}
:host([active]){background:#2d2d2d;box-shadow:inset 0 0 0 1px #353535}
i{position:absolute;bottom:1px;width:8px;height:4px;border-radius:2px;background:#999;display:none}
:host([run]) i{display:block}:host([active]) i{width:20px;background:#4cc2ff}</style><slot></slot><i></i>`);

define('win-taskbar',`<style>
:host{display:flex;align-items:center;height:60px;background:#202020;color:#fff;font:15.500px "Open Sans","Noto Sans",sans-serif;flex:none}
.c{display:flex;gap:5px}
.col{display:flex;flex-direction:column}
fit-text{line-height:20px}
</style>
<ui-icon name="cloud" w="30" h="20" style="margin-left:26px"></ui-icon>
<div class="col" style="margin-left:9px;width:50px"><fit-text w="32">25°C</fit-text><fit-text w="48" style="color:#ccc">Cloudy</fit-text></div>
<div class="c" style="margin-left:627px">
<task-icon><ui-icon name="win" w="29" h="29"></ui-icon></task-icon>
<task-icon><ui-icon name="wsearch" w="27" h="29"></ui-icon></task-icon>
<task-icon run><ui-icon name="folder" w="30" h="27"></ui-icon></task-icon>
<task-icon run active><ui-icon name="edge" w="30" h="30"></ui-icon></task-icon>
<task-icon><ui-icon name="store" w="29" h="29"></ui-icon></task-icon>
<task-icon><ui-icon name="help" w="30" h="30"></ui-icon></task-icon>
<task-icon><ui-icon name="chrome" w="30" h="30"></ui-icon></task-icon>
<task-icon run><ui-icon name="term" w="30" h="24"></ui-icon></task-icon></div>
<ui-icon name="wchev" w="16" h="9" style="margin-left:461px"></ui-icon>
<div class="col" style="align-items:center;margin-left:19px;width:31px"><fit-text w="29">ENG</fit-text><fit-text w="15">IN</fit-text></div>
<ui-icon name="wifi" w="20" h="16" style="margin-left:22px"></ui-icon>
<ui-icon name="vol" w="20" h="18" style="margin-left:10px"></ui-icon>
<ui-icon name="batt" w="20" h="14" style="margin-left:10px"></ui-icon>
<div class="col" style="align-items:flex-end;margin-left:17px;width:73px"><fit-text w="58">01:16 PM</fit-text><fit-text w="72">13-11-2022</fit-text></div>`);

define('water-mark',`<style>
:host{position:absolute;inset:0;overflow:hidden;pointer-events:none}
.w{position:absolute;white-space:pre;font-size:55.700px;line-height:64px;color:rgba(255,255,255,.82);text-shadow:2px 2px 3px rgba(0,0,0,.4)}
.n{position:absolute;left:547px;top:1025px;line-height:30px;font-size:23.500px;color:#fff;text-shadow:2px 2px 3px rgba(0,0,0,.7)}
</style><div id="m"></div><fit-text class="n" w="826">Protected with free version of Watermarkly. Full version doesn't put this mark.</fit-text>`,function(r){
  r.querySelector('#m').innerHTML=[175.500,507.500,839.500].map(y=>[-211,668,1546].map(x=>`<div class="w" style="left:${x}px;top:${y}px">© PNT2022TMID20098</div>`).join('')).join('');
});

define('app-screen',`<style>:host{display:flex;flex-direction:column;position:relative;width:1920px;height:1080px;overflow:hidden}</style>
<edge-tabstrip></edge-tabstrip><edge-toolbar></edge-toolbar><nr-header></nr-header><nr-editor></nr-editor><win-taskbar></win-taskbar><water-mark></water-mark>`);
</script>
</body>
</html>
